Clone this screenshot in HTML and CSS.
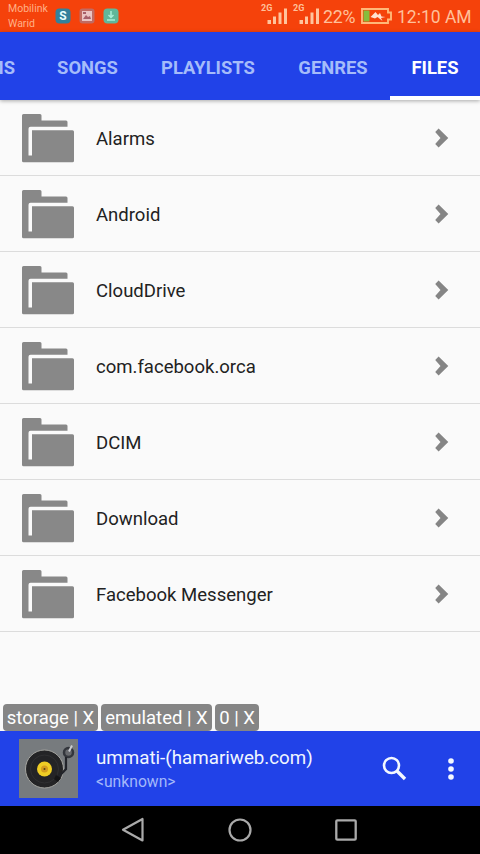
FILE: index.html
```html
<!DOCTYPE html>
<html lang="en">
<head>
<meta charset="utf-8">
<title>Files</title>
<link rel="stylesheet" href="styles.css">
</head>
<body>
<svg width="0" height="0" class="defs">
  <symbol id="folder" viewBox="0 0 52 49">
    <path fill="#888" d="M1.500 0h16.500q1.500 0 1.500 1.500V6.500h24.500q1.500 0 1.500 1.500v4.800H8.500Q6.500 12.800 6.500 14.800V41.500h3.500V16.300h40.500q1.500 0 1.500 1.500v29q0 1.500-1.500 1.500h-49Q0 48.300 0 46.800v-45.300Q0 0 1.500 0z"/>
  </symbol>
  <symbol id="chevron" viewBox="0 0 14 20">
    <path fill="#858585" d="M3.600 0.500 13.300 10 3.600 19.500 0.200 16 5.500 10 0.200 4z"/>
  </symbol>
  <symbol id="signal" viewBox="0 0 27 22">
    <path fill="#ffc49c" d="M6.500 16h3.500v4H6.500zM12 12.500h3V20h-3zM17.500 8.500h3V20h-3zM23 4.500h3V20h-3z"/>
  </symbol>
</svg>
<div class="screen">
  <header class="status">
    <div class="carrier">Mobilink<br>Warid</div>
    <div class="notices">
      <svg width="16" height="16" viewBox="0 0 16 16"><rect x=".5" y=".5" width="15" height="15" rx="4" fill="#33819c"/><text x="8" y="12.300" class="skype">S</text></svg>
      <svg width="16" height="16" viewBox="0 0 16 16"><rect x=".5" y=".5" width="15" height="15" rx="3" fill="#c16b62"/><rect x="3" y="3" width="10" height="10" fill="#eac4c3"/><path d="M4 11l3-4 2 2 2-1 1 3zM4 4h3v2H4z" fill="#a6606b"/></svg>
      <svg width="16" height="16" viewBox="0 0 16 16"><rect x=".5" y=".5" width="15" height="15" rx="4" fill="#60b79a"/><path d="M8 3v6M5.500 7 8 9.500 10.500 7M4 12h8" fill="none" stroke="#a8efd9" stroke-width="1.500"/></svg>
    </div>
    <div class="signal"><svg width="27" height="22"><use href="#signal"/></svg><span class="net">2G</span></div>
    <div class="signal second"><svg width="27" height="22"><use href="#signal"/></svg><span class="net">2G</span></div>
    <span class="percent">22%</span>
    <svg class="battery" width="31" height="16" viewBox="0 0 31 16"><path d="M1 1h26v3.500h3v7h-3V15H1z" fill="none" stroke="#ffb878" stroke-width="1.900"/><path d="M2.500 2.500h6v11h-6z" fill="#86bd3c"/><path d="M9.500 9 14.500 4l2.500 3 2-2 1.500 3.500 4 .5-4.500 1 1.500 3-5-4-2.500 1.500z" fill="#ffe0d0"/></svg>
    <span class="clock">12:10 AM</span>
  </header>
  <nav class="tabs">
    <span class="tab cut">MS</span>
    <span class="tab">SONGS</span>
    <span class="tab">PLAYLISTS</span>
    <span class="tab">GENRES</span>
    <span class="tab active">FILES</span>
  </nav>
  <main class="list">
    <div class="row"><svg class="folder"><use href="#folder"/></svg><span class="name">Alarms</span><svg class="chevron"><use href="#chevron"/></svg></div>
    <div class="row"><svg class="folder"><use href="#folder"/></svg><span class="name">Android</span><svg class="chevron"><use href="#chevron"/></svg></div>
    <div class="row"><svg class="folder"><use href="#folder"/></svg><span class="name">CloudDrive</span><svg class="chevron"><use href="#chevron"/></svg></div>
    <div class="row"><svg class="folder"><use href="#folder"/></svg><span class="name">com.facebook.orca</span><svg class="chevron"><use href="#chevron"/></svg></div>
    <div class="row"><svg class="folder"><use href="#folder"/></svg><span class="name">DCIM</span><svg class="chevron"><use href="#chevron"/></svg></div>
    <div class="row"><svg class="folder"><use href="#folder"/></svg><span class="name">Download</span><svg class="chevron"><use href="#chevron"/></svg></div>
    <div class="row"><svg class="folder"><use href="#folder"/></svg><span class="name">Facebook Messenger</span><svg class="chevron"><use href="#chevron"/></svg></div>
  </main>
  <div class="crumbs">
    <span class="crumb c1">storage | X</span><span class="crumb c2">emulated | X</span><span class="crumb c3">0 | X</span>
  </div>
  <section class="player">
    <svg class="art" width="59" height="59" viewBox="0 0 59 59">
      <rect width="59" height="59" fill="#777b7e"/>
      <circle cx="25.500" cy="30" r="19" fill="#242426" stroke="#a5a5a0" stroke-width="1"/>
      <circle cx="25.500" cy="30" r="14" fill="none" stroke="#303032"/>
      <circle cx="25.500" cy="30" r="7.500" fill="#efcd25"/>
      <circle cx="25.500" cy="30" r="3.500" fill="#d49d1e"/>
      <circle cx="25.500" cy="30" r="1" fill="#594515"/>
      <circle cx="49.500" cy="13.500" r="4.500" fill="#66686c" stroke="#33363c" stroke-width="2.500"/>
      <path d="M53 6.500l-3 6" stroke="#c9cbd0" stroke-width="2"/>
      <path d="M47 18v12l-7 7.500" fill="none" stroke="#22242a" stroke-width="2.200"/>
      <path d="M37 36l5 3-3 4-4-3z" fill="#151517"/>
    </svg>
    <div class="track"><div class="title">ummati-(hamariweb.com)</div><div class="artist">&lt;unknown&gt;</div></div>
    <svg class="search" width="25" height="25" viewBox="0 0 25 25"><circle cx="9.500" cy="9.500" r="7.500" fill="none" stroke="#f3f8ff" stroke-width="2.600"/><path d="M15 15l8 8" stroke="#f3f8ff" stroke-width="3.400"/></svg>
    <svg class="more" width="6" height="24" viewBox="0 0 6 24"><g fill="#f3f8ff"><circle cx="3" cy="4" r="2.800"/><circle cx="3" cy="12" r="2.800"/><circle cx="3" cy="20" r="2.800"/></g></svg>
  </section>
  <footer class="nav">
    <svg width="24" height="26" viewBox="0 0 24 26"><path d="M21.500 2v21.500L2 12.800z" fill="none" stroke="#aaa" stroke-width="2.200" stroke-linejoin="round"/></svg>
    <svg width="24" height="24" viewBox="0 0 24 24"><circle cx="12" cy="12" r="10.500" fill="none" stroke="#aaa" stroke-width="2.200"/></svg>
    <svg width="22" height="22" viewBox="0 0 22 22"><rect x="1.300" y="1.300" width="19.400" height="19.400" rx="1" fill="none" stroke="#aaa" stroke-width="2.300"/></svg>
  </footer>
</div>
</body>
</html>
```

FILE: styles.css
```css
* { box-sizing: border-box; }
body { margin: 0; font-family: Roboto, "Liberation Sans", sans-serif; }
svg { display: block; flex: none; }
.defs { position: absolute; }
.screen { width: 480px; height: 854px; display: flex; flex-direction: column; background: #fafafa; overflow: hidden; }

.status { flex: none; height: 32px; display: flex; align-items: center; background: #f5420b; color: #ffc09a; white-space: nowrap; }
.carrier { width: 55px; padding: 1px 0 0 8px; font-size: 10.5px; line-height: 14.5px; color: #ffb087; }
.notices { display: flex; gap: 8px; width: 206px; }
.skype { font: bold 12px Roboto, sans-serif; text-anchor: middle; fill: #e8ffff; }
.signal { position: relative; width: 27px; margin-top: -2px; }
.signal.second { margin-left: 5px; }
.net { position: absolute; left: 0; top: 0; font-size: 9px; line-height: 8px; font-weight: 700; }
.percent { width: 38px; margin-left: 3px; font-size: 17.8px; letter-spacing: -.2px; padding-top: 1px; }
.battery { margin-top: -1px; }
.clock { margin-left: 5px; font-size: 17.5px; padding-top: 1px; }

.tabs { position: relative; z-index: 1; flex: none; height: 68px; display: grid; grid-template-columns: 36px 104px 137px 113px 90px; background: #2142e8; box-shadow: 0 1px 4px #0005; }
.tab { display: flex; align-items: center; justify-content: center; padding: 2px 1px 0 0; font-size: 18.4px; font-weight: 700; color: #a5bcfa; white-space: nowrap; overflow: hidden; }
.tab.cut { justify-content: flex-end; padding-right: 21px; }
.tab.active { color: #fff; border-bottom: 4px solid #fff; padding: 6px 0 0; }

.list { flex: none; height: 604px; }
.row { height: 76px; display: flex; align-items: center; padding: 1px 31px 0 22px; border-bottom: 1.5px solid #dcdcdc; }
.folder { width: 52px; height: 49px; margin-right: 22px; }
.name { flex: 1; padding-top: 1px; font-size: 18.55px; color: #222; white-space: nowrap; }
.chevron { width: 14px; height: 20px; }

.crumbs { flex: none; height: 27px; display: flex; gap: 3px; padding-left: 3px; }
.crumb { height: 27px; display: flex; align-items: center; justify-content: center; background: #858585; border-radius: 4px; color: #fff; font-size: 18.5px; white-space: nowrap; padding-top: 1px; }
.c1 { width: 95px; }
.c2 { width: 111px; }
.c3 { width: 44px; }

.player { flex: none; height: 75px; display: flex; align-items: center; background: #2142e8; padding-left: 19px; }
.track { margin-left: 18px; width: 286px; padding-top: 1px; }
.title { font-size: 18.75px; line-height: 24px; color: #f0f6ff; }
.artist { font-size: 15.7px; line-height: 23px; color: #a3b8fa; }
.more { margin-left: 41px; }

.nav { flex: 1; display: flex; align-items: center; gap: 83px; padding-left: 121px; background: #000; }
```
